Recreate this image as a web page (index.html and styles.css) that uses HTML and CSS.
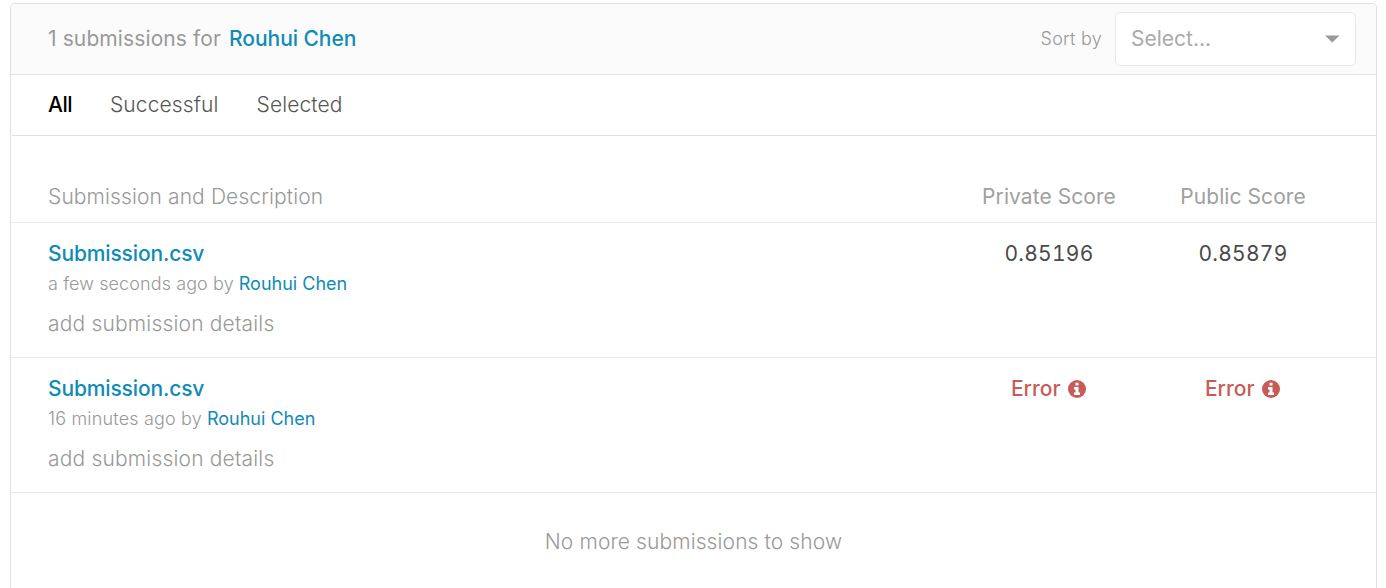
FILE: index.html
```html
<!DOCTYPE html>
<html lang="en">
<head>
<meta charset="utf-8">
<title>Submissions</title>
<link rel="stylesheet" href="styles.css">
</head>
<body>
<main class="panel">
  <header class="header">
    <div class="title"><span>1 submissions for</span><a class="user">Rouhui Chen</a></div>
    <div class="sort"><span class="sort-label">Sort by</span>
      <div class="select"><span>Select...</span><svg class="caret" width="16" height="8" viewBox="0 0 16 8"><path d="M1 .5h14.5L8.3 7.5z" fill="#999"/></svg></div>
    </div>
  </header>
  <nav class="tabs"><span class="tab active">All</span><span class="tab">Successful</span><span class="tab">Selected</span></nav>
  <div class="row columns"><span class="desc">Submission and Description</span><span class="score">Private Score</span><span class="score">Public Score</span></div>
  <section class="row entry">
    <div class="desc"><a class="file">Submission.csv</a><div class="meta"><span class="time recent">a few seconds ago by</span><a class="author">Rouhui Chen</a></div><div class="details">add submission details</div></div>
    <span class="score number">0.85196</span><span class="score number">0.85879</span>
  </section>
  <section class="row entry">
    <div class="desc"><a class="file">Submission.csv</a><div class="meta"><span class="time">16 minutes ago by</span><a class="author">Rouhui Chen</a></div><div class="details">add submission details</div></div>
    <span class="score error"><span>Error</span><svg class="info" width="18" height="18" viewBox="0 0 18 18"><circle cx="9" cy="9" r="9" fill="#c75c57"/><path d="M7.5 2.8h3v2.7h-3zM6 7h4.5v5.5H12V15H6v-2.5h1.5v-3H6z" fill="#fff"/></svg></span>
    <span class="score error"><span>Error</span><svg class="info" width="18" height="18" viewBox="0 0 18 18"><circle cx="9" cy="9" r="9" fill="#c75c57"/><path d="M7.5 2.8h3v2.7h-3zM6 7h4.5v5.5H12V15H6v-2.5h1.5v-3H6z" fill="#fff"/></svg></span>
  </section>
  <footer class="end">No more submissions to show</footer>
</main>
</body>
</html>
```
FILE: styles.css
```css
* { box-sizing: border-box; }
body { margin: 0; height: 588px; padding: 3px 9px 0 10px; background: #fff; font-family: Inter, sans-serif; font-size: 21px; font-weight: 300; color: #999; }
.panel { height: 585px; border: 1px solid #dedfe0; border-bottom: 0; border-radius: 5px 5px 0 0; background: #fff; white-space: nowrap; }
.header { height: 71px; display: flex; align-items: center; justify-content: space-between; padding: 0 20px 0 37px; background: #fbfbfb; border-bottom: 1px solid #e6e6e6; border-radius: 4px 4px 0 0; }
.title { display: flex; gap: 8px; padding-bottom: 2px; font-weight: 400; letter-spacing: .11px; }
.user, .file, .author { color: #0f8bb7; }
.user { font-weight: 500; letter-spacing: -.05px; }
.sort { display: flex; align-items: center; gap: 13px; }
.sort-label { font-size: 18px; letter-spacing: .25px; padding-bottom: 2px; }
.select { width: 241px; height: 54px; display: flex; align-items: center; justify-content: space-between; padding: 0 15px; border: 1px solid #e8e8e8; border-radius: 5px; background: #fff; font-weight: 400; color: #aaa; }
.select span { padding-bottom: 2px; }
.tabs { height: 61px; display: flex; align-items: center; gap: 38px; margin-left: 1px; padding: 0 0 1px 36px; border-bottom: 1px solid #dedfe0; color: #555; letter-spacing: .11px; }
.active { color: #000; font-weight: 500; letter-spacing: -.5px; }
.row { display: grid; grid-template-columns: 904px 194px 194px; padding-left: 37px; border-bottom: 1px solid #e8e8e8; }
.columns { height: 87px; padding-top: 48px; line-height: 26px; letter-spacing: .11px; }
.score { text-align: center; }
.columns .score { font-weight: 400; letter-spacing: .07px; color: #a0a0a0; }
.entry { height: 135px; padding-top: 18px; line-height: 26px; }
.file { display: block; font-weight: 500; letter-spacing: -.14px; }
.meta { display: flex; gap: 5px; font-size: 18px; line-height: 24px; margin-top: 5px; }
.time { letter-spacing: .17px; }
.recent { letter-spacing: .1px; }
.author { font-weight: 400; }
.details { margin-top: 15px; letter-spacing: .18px; }
.number { color: #4a4a4a; font-weight: 400; letter-spacing: .25px; font-variant-numeric: tabular-nums; }
.error { display: flex; align-items: center; justify-content: center; gap: 7.5px; height: 26px; padding-right: 1px; color: #c75c57; font-weight: 500; }
.end { height: 93px; display: flex; align-items: center; justify-content: center; padding-top: 3px; letter-spacing: .11px; }
```
